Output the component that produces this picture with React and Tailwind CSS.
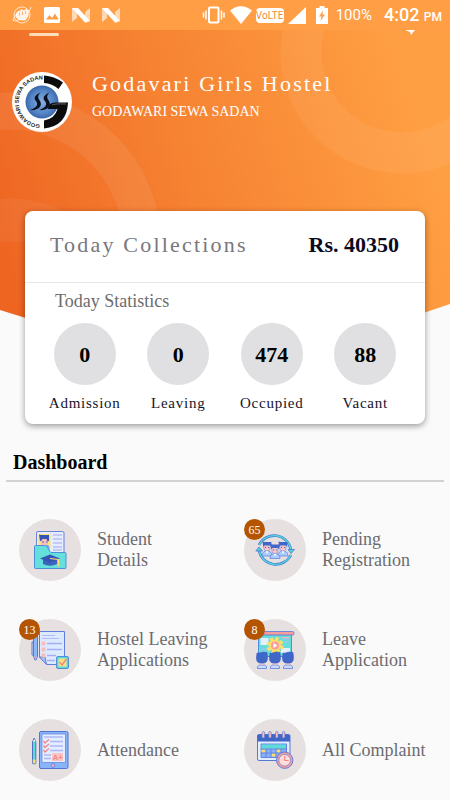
import React from 'react';

const stats = [
  { label: 'Admission', value: 0 },
  { label: 'Leaving', value: 0 },
  { label: 'Occupied', value: 474 },
  { label: 'Vacant', value: 88 },
];

const menu = [
  { label: 'Student Details', Icon: StudentIcon, narrow: true },
  { label: 'Pending Registration', Icon: PendingIcon, badge: 65 },
  { label: 'Hostel Leaving Applications', Icon: LeavingIcon, badge: 13 },
  { label: 'Leave Application', Icon: LeaveIcon, badge: 8 },
  { label: 'Attendance', Icon: AttendanceIcon },
  { label: 'All Complaint', Icon: ComplaintIcon },
];

function StatusBar() {
  return (
    <div className="relative flex h-[30px] items-center justify-between bg-[#ff9e45] pr-2 pl-3 font-['Roboto',sans-serif] text-white">
      <div className="flex items-center gap-3">
        {/* fist */}
        <svg className="h-5 w-5" viewBox="0 0 20 20" fill="none" stroke="#fff">
          <circle cx="10" cy="10" r="8" strokeWidth="1" opacity=".7" />
          <path d="M1 15c2 4 17-6 18-13M2 16c-3-1 3-9 8-12" strokeWidth="1" opacity=".7" />
          <path d="M4.500 8.500l1.500-2 2 .5 2-2 2 1 2-1.500 2 1.500v5l-3 4-6.500-.5-2.500-3z" fill="#fff" fillOpacity=".85" />
          <path d="M7.500 7.500v3M10.500 6.500v3.500M13.500 6v3" stroke="#ff9e45" strokeWidth=".7" />
        </svg>
        {/* picture */}
        <svg className="h-4 w-4" viewBox="0 0 16 16">
          <rect width="16" height="16" rx="1.5" fill="#fff" />
          <path d="M2 12.5l3.500-4.500L8 11l3-4.500 3.500 6z" fill="#ff9e45" />
        </svg>
        <NougatIcon />
        <NougatIcon />
      </div>
      <div className="flex items-center">
        {/* vibrate */}
        <svg className="h-5 w-6" viewBox="0 0 24 20" fill="none" stroke="#fff">
          <rect x="7" y="2.500" width="9.500" height="15" rx="1" strokeWidth="2" />
          <path d="M4 5.500v9M1.500 7.500v5M19.500 5.500v9M22 7.500v5" strokeWidth="1.500" />
        </svg>
        <svg className="ml-1 h-[18px] w-[22px]" viewBox="0 0 22 18">
          <path d="M0 4.500Q11-4 22 4.500L11 18z" fill="#fff" />
        </svg>
        <span className="ml-1 flex h-[15px] w-7 items-center justify-center rounded-sm bg-white text-[10px] text-[#f08a35]">
          VoLTE
        </span>
        <svg className="ml-1 h-[17px] w-[18px]" viewBox="0 0 18 17">
          <path d="M0 17L18 0v17z" fill="#fff" />
        </svg>
        <svg className="ml-[10px] h-[18px] w-3" viewBox="0 0 12 18">
          <path d="M3.500 0h5v2H12v16H0V2h3.500z" fill="#fff" />
          <path d="M7 4.500L3 10.500h2.500L4.500 15 9 8.500H6.500z" fill="#ff9e45" />
        </svg>
        <span className="ml-2 text-[15px] leading-5">100%</span>
        <span className="ml-3 text-lg leading-5 font-medium">
          4:02 <span className="text-xs">PM</span>
        </span>
      </div>
    </div>
  );
}

function NougatIcon() {
  return (
    <svg className="h-4 w-[18px]" viewBox="0 0 18 16">
      <path d="M0 1l5 1v9l-5 4z M13 5l5-4v13l-5 2z" fill="#fff" opacity=".6" />
      <path d="M0 1h6l12 13-5 1.500z" fill="#fff" />
    </svg>
  );
}

function HeaderBackground() {
  return (
    <svg
      className="absolute inset-x-0 top-0 h-[330px] w-full"
      viewBox="0 30 450 330"
      preserveAspectRatio="none"
      aria-hidden="true"
    >
      <defs>
        <linearGradient id="sunset" gradientUnits="userSpaceOnUse" x1="0" y1="250" x2="420" y2="110">
          <stop offset="0" stopColor="#ee6522" />
          <stop offset=".45" stopColor="#f68232" />
          <stop offset="1" stopColor="#ff9f43" />
        </linearGradient>
        <clipPath id="headerShape">
          <path d="M0 30H450V304L225 380L0 310Z" />
        </clipPath>
      </defs>
      <g clipPath="url(#headerShape)">
        <rect y="30" width="450" height="330" fill="url(#sunset)" />
        <g fill="none" stroke="#fff" strokeOpacity=".06">
          <circle cx="402" cy="52" r="101" strokeWidth="41" />
          <circle cx="10" cy="243" r="132" strokeWidth="37" strokeOpacity=".07" />
          <circle cx="12" cy="308" r="88" strokeWidth="43" strokeOpacity=".05" />
        </g>
      </g>
    </svg>
  );
}

function Logo() {
  return (
    <svg className="h-[60px] w-[60px] shrink-0" viewBox="0 0 60 60" role="img" aria-label="Godawari Sewa Sadan">
      <defs>
        <radialGradient id="logoBlue">
          <stop offset="0" stopColor="#86aee0" />
          <stop offset=".7" stopColor="#5585c6" />
          <stop offset="1" stopColor="#3b68aa" />
        </radialGradient>
        <path id="logoTextArc" d="M29 52.500A22.500 22.500 0 0 1 29.500 7.500" />
      </defs>
      <circle cx="30" cy="30" r="30" fill="#fff" />
      <circle cx="30" cy="30" r="16.500" fill="url(#logoBlue)" />
      <text fontFamily="Liberation Sans, sans-serif" fontWeight="bold" fontSize="5.600" fill="#222">
        <textPath href="#logoTextArc" startOffset="1">GODAWARI SEWA SADAN</textPath>
      </text>
      <path d="M32 3.500Q42 4 51 10.500L46.500 17Q40 11.500 32 11z" fill="#0c0c0c" />
      <path d="M36 37Q36 30.500 43 30.500H56Q55 54 32 56.500V48.500Q43 46.500 45.500 37z" fill="#0c0c0c" />
      <path d="M40 33Q42 31.500 54 32" stroke="#777" strokeWidth=".8" fill="none" />
      <path
        d="M29 20c-6 3-8 6-5 9 3 4 0 7-6 9 8 1 13-4 10-9-3-4-2-6 1-9z M38 20c-6 3-8 6-5 9 3 4 0 7-6 9 8 1 13-4 10-9-3-4-2-6 1-9z"
        fill="#0a1020"
      />
    </svg>
  );
}

function StudentIcon() {
  return (
    <svg className="h-10 w-10" viewBox="0 0 40 40">
      <rect x="6.500" y="1.500" width="27.500" height="25" rx="1.500" fill="#e3edff" stroke="#6b84d8" />
      <rect x="8.500" y="4" width="12" height="14" fill="#ffdf78" />
      <path d="M9.500 18q0-4 5-4t5 4v4h-10z" fill="#7da7f5" />
      <rect x="11" y="7" width="7" height="8.500" rx="3" fill="#f7bfc4" />
      <path d="M9 4.500l2 .5h8v6h-1.500l-1-2h-4l-1.500 2H10z" fill="#3455b5" />
      <path d="M12 12h2M16 12h2" stroke="#3455b5" strokeWidth=".8" />
      <path d="M23 5h9M23 9h9M23 13h9M23 17h9M23 20h9" stroke="#b9bdf8" strokeWidth="1.300" />
      <path d="M4.500 16.500q0-1 1-1h9q2 0 3 2l2.500 4q.5 1 2 1h13q1 0 1 1v14q0 1-1 1h-29.500q-1 0-1-1z" fill="#65dfdc" stroke="#4d8fd8" />
      <path d="M13 29v5q7 3.500 14 0v-5z" fill="#3d64bd" />
      <path d="M10 28.500l10-4 10 4-10 4z" fill="#3455b5" />
      <path d="M20 28.500l8.500 1v7" stroke="#ffdf78" strokeWidth="1.200" fill="none" />
    </svg>
  );
}

function Person({ x, y }) {
  return (
    <g transform={`translate(${x} ${y})`}>
      <path d="M-5 11q0-5 5-5t5 5z" fill="#a9cdfd" stroke="#5c7ddd" strokeWidth=".7" />
      <path d="M-1.500 6h3L0 9z" fill="#fff" />
      <rect x="-3.200" y="-2" width="6.400" height="8" rx="3" fill="#f9c4c8" stroke="#5c7ddd" strokeWidth=".5" />
      <path d="M-4.500-3.500l2 .5h7l-.3 5-1-1.500h-6l-1 1.500z" fill="#3f68ca" />
      <path d="M-2 2.500h1.200M1 2.500h1.200" stroke="#3455b5" strokeWidth=".8" />
    </g>
  );
}

function PendingIcon() {
  return (
    <svg className="h-10 w-10" viewBox="0 0 40 40">
      <g fill="none">
        <path d="M4 15A17 17 0 0 1 36 20M36 25A17 17 0 0 1 4 20" stroke="#4777d0" strokeWidth="2.600" />
        <path d="M4 15A17 17 0 0 1 36 20M36 25A17 17 0 0 1 4 20" stroke="#54d4dc" strokeWidth="1.400" />
      </g>
      <path d="M33 19.500h6.500L36 23.500z M.8 21L4 17l3.500 4z" fill="#54d4dc" stroke="#4777d0" strokeWidth=".8" />
      <Person x={12} y={15} />
      <Person x={28} y={15} />
      <Person x={20} y={17.5} />
    </svg>
  );
}

function LeavingIcon() {
  return (
    <svg className="h-10 w-10" viewBox="0 0 40 40">
      <path d="M9.500 1.500h25v33H17L9.500 27z" fill="#dceaff" stroke="#5f7edb" />
      <path d="M9.500 27H15l1.500 7.500z" fill="#a8c5fb" stroke="#5f7edb" />
      <path d="M12 5.500h13M12 8.500h17" stroke="#b5baf6" strokeWidth="1.200" />
      <path d="M17 13.500h15M17 19.500h15M17 25.500h9M17 30.500h8" stroke="#a6acf2" strokeWidth="1.300" />
      <path d="M11.500 11.500h4v4h-4zM11.500 17.500h4v4h-4zM11.500 23.500h4v4h-4z" fill="#fbbcb9" />
      <path d="M3.500 6l2-1.500L7.500 6v20.500L6 30H5l-1.500-3.500z" fill="#8cb8fb" stroke="#4d6ecf" strokeWidth=".9" />
      <path d="M3.500 12h-1.500v13h1.500" fill="none" stroke="#4d6ecf" strokeWidth=".9" />
      <path d="M4 27h3l-1.500 3z" fill="#f5a0a0" />
      <rect x="26.500" y="26.500" width="12" height="12" rx="1.500" fill="#5bd8d6" stroke="#4d8fd8" />
      <rect x="28.500" y="28.500" width="8" height="8" fill="#ffe083" />
      <path d="M29.500 32l2.500 3 4.500-6" fill="none" stroke="#f08080" strokeWidth="1.300" />
    </svg>
  );
}

function LeaveIcon() {
  return (
    <svg className="h-10 w-10" viewBox="0 0 40 40">
      <rect x="3.500" y="4.500" width="33" height="22" fill="#65ded9" stroke="#4d8fd8" />
      <rect x="2.500" y="1.500" width="36.500" height="3.500" rx="1.500" fill="#f99c9c" stroke="#5f7edb" strokeWidth=".9" />
      <path d="M5.500 8h8v7h-8zM26 18h9v5h-9z" fill="#e6efff" />
      <path d="M27 9h7M28 12h6M6 19h6M6 21.500h5" stroke="#b4bdf8" strokeWidth="1.200" />
      <path d="M27 7.500h7" stroke="#ffb9a8" strokeWidth="1" />
      <circle cx="20" cy="15.500" r="7" fill="none" stroke="#ffdf68" strokeWidth="3" strokeDasharray="3.500 2" />
      <circle cx="20" cy="15.500" r="6" fill="#ffdf68" />
      <circle cx="20" cy="15.500" r="4" fill="#f99c9c" />
      <path d="M18.500 13l4 2.500-4 2.500z" fill="#fff" />
      {[7, 20, 33].map((x) => (
        <g key={x} transform={`translate(${x} 0)`}>
          <path d="M-4.500 38.500v-2l2-1.500h5l2 1.500v2z" fill="#c9dcff" stroke="#5f7edb" strokeWidth=".8" />
          <rect x="-1.500" y="31" width="3" height="4" fill="#f8b9bf" />
          <path d="M-5 23q2 .5 4-.5t6 0l.5 5q0 5-3.500 5.500h-4Q-6 32.500-5.500 27z" fill="#3f67c8" stroke="#365bc0" strokeWidth=".6" />
        </g>
      ))}
    </svg>
  );
}

function AttendanceIcon() {
  return (
    <svg className="h-10 w-10" viewBox="0 0 40 40">
      <rect x="9.500" y="1.500" width="28.500" height="37" rx="1.500" fill="#8ab4fa" stroke="#4f74d3" />
      <rect x="12" y="4" width="23.500" height="28.500" fill="#e2edff" stroke="#5f7edb" strokeWidth=".7" />
      <path d="M14 7h19M20 11.500h13M20 16h13M20 20.500h13M14 25h7M14 28.500h7" stroke="#b0b6f5" strokeWidth="1.300" />
      <path d="M13.500 11l1.500 2 4-3.500M13.500 15.500l1.500 2 4-3.500M13.500 20l1.500 2 4-3.500" stroke="#f38787" strokeWidth="1.300" fill="none" />
      <rect x="22" y="23" width="11" height="8" fill="#fdc4c2" />
      <text x="22.500" y="30" fontFamily="Liberation Sans, sans-serif" fontWeight="bold" fontSize="8" fill="#f08a8a">A+</text>
      <circle cx="23" cy="35.500" r="1.800" fill="#fbb9bd" stroke="#4f74d3" strokeWidth=".7" />
      <path d="M2.500 12L4.200 8l1.600 4v21q0 .8-.8.800H3.300q-.8 0-.8-.8z" fill="#5fdcd8" stroke="#4565bd" strokeWidth=".9" />
      <path d="M3 11.500L4.200 9l1.300 2.500z" fill="#fff" />
      <path d="M2.800 29.500h2.700v3.800H2.800z" fill="#ffdf68" />
    </svg>
  );
}

function ComplaintIcon() {
  return (
    <svg className="h-10 w-10" viewBox="0 0 40 40">
      <rect x="2.500" y="4.500" width="32.500" height="26" rx="1.500" fill="#e2edff" stroke="#5878d8" />
      <path d="M2.500 11.500V6q0-1.500 1.500-1.500h29.500Q35 4.500 35 6v5.500z" fill="#3f67c8" />
      <g fill="#fbbcb9" stroke="#4f74d3" strokeWidth=".6">
        <rect x="7" y="1.500" width="2.600" height="6.500" rx="1.300" />
        <rect x="13.700" y="1.500" width="2.600" height="6.500" rx="1.300" />
        <rect x="20.500" y="1.500" width="2.600" height="6.500" rx="1.300" />
        <rect x="27.300" y="1.500" width="2.600" height="6.500" rx="1.300" />
      </g>
      <path d="M6 14h25.500v13.500H6z" fill="#87affa" stroke="#4f74d3" strokeWidth=".8" />
      <path d="M6.500 14.500h24.500v4H6.500z" fill="#5fdcd8" />
      <path d="M6.500 19.500h4v3h-4zM21.500 19.500h4v3h-4zM16.500 23.500h4v3h-4z" fill="#ffdf68" />
      <path d="M6 19h25.500M6 23h25.500M11 19v8.500M16 19v8.500M21 19v8.500M26 19v8.500" stroke="#5878d8" strokeWidth=".7" />
      <circle cx="29.700" cy="30.200" r="8.200" fill="#f59d9d" stroke="#5878d8" strokeWidth=".9" />
      <circle cx="29.700" cy="30.200" r="5.800" fill="#fddedd" stroke="#5878d8" strokeWidth=".6" />
      <path d="M29.700 26v4.500h4" stroke="#f08a8a" strokeWidth="1.200" fill="none" />
    </svg>
  );
}

export default function App() {
  return (
    <div className="min-h-screen bg-[#fafafa] font-['Liberation_Serif',serif]">
      <StatusBar />

      <header className="relative">
        <HeaderBackground />
        <div className="relative">
          {/* Toolbar, scrolled almost fully under the status bar */}
          <div className="flex h-[42px] items-start justify-between pr-[35px] pl-[29px]">
            <span className="mt-[3px] h-[3px] w-[30px] rounded-full bg-[#ffdcb8]" />
            <svg className="h-[5px] w-[10px]" viewBox="0 0 10 5">
              <path d="M0 0h10L6 5 5 2z" fill="#fff" />
            </svg>
          </div>

          <div className="flex items-start gap-5 px-3">
            <Logo />
            <div className="text-white">
              <h1 className="text-[22px] leading-6 tracking-widest">Godavari Girls Hostel</h1>
              <p className="mt-1 text-sm leading-6">GODAWARI SEWA SADAN</p>
            </div>
          </div>

          {/* Collections card */}
          <section className="mx-[25px] mt-[79px] rounded-lg bg-white shadow-[0_2px_6px_rgba(0,0,0,0.4)]">
            <div className="flex h-[72px] items-center justify-between border-b border-[#e8e8e8] pr-[26px] pb-1 pl-[25px]">
              <h2 className="text-[22px] leading-7 tracking-widest text-[#77777c]">Today Collections</h2>
              <span className="text-[22px] leading-7 font-semibold text-[#0b0a20]">Rs. 40350</span>
            </div>
            <h3 className="pt-1 pl-[30px] text-[18px] leading-7 text-[#6c6c6e]">Today Statistics</h3>
            <div className="grid grid-cols-4 px-[13px] pt-2 pb-[11px]">
              {stats.map((stat) => (
                <div key={stat.label} className="flex flex-col items-center">
                  <span className="flex h-[62px] w-[62px] items-center justify-center rounded-full bg-[#e0e0e2] text-[22px] font-semibold text-black">
                    {stat.value}
                  </span>
                  <span className="mt-2 text-[15px] leading-5 tracking-wider text-[#15142a]">{stat.label}</span>
                </div>
              ))}
            </div>
          </section>
        </div>
      </header>

      <main className="px-[6px] pt-6">
        <h2 className="border-b-2 border-[#d2d2d2] pb-1 pl-[7px] text-[20px] leading-7 font-semibold text-black">
          Dashboard
        </h2>
        <nav className="-mx-[6px] mt-[18px] grid grid-cols-2">
          {menu.map(({ label, Icon, badge, narrow }) => (
            <a key={label} href="#" className="flex h-[100px] items-center gap-4 pr-3 pl-[19px]">
              <span className="relative flex h-[62px] w-[62px] shrink-0 items-center justify-center rounded-full bg-[#e6e0e1]">
                <Icon />
                {badge && (
                  <span className="absolute top-0 left-0 flex h-[21px] w-[21px] items-center justify-center rounded-full bg-[#b55400] text-xs text-white">
                    {badge}
                  </span>
                )}
              </span>
              <span className={`text-[18px] leading-[21px] text-[#6c6c70] ${narrow ? 'max-w-20' : ''}`}>{label}</span>
            </a>
          ))}
        </nav>
      </main>
    </div>
  );
}
